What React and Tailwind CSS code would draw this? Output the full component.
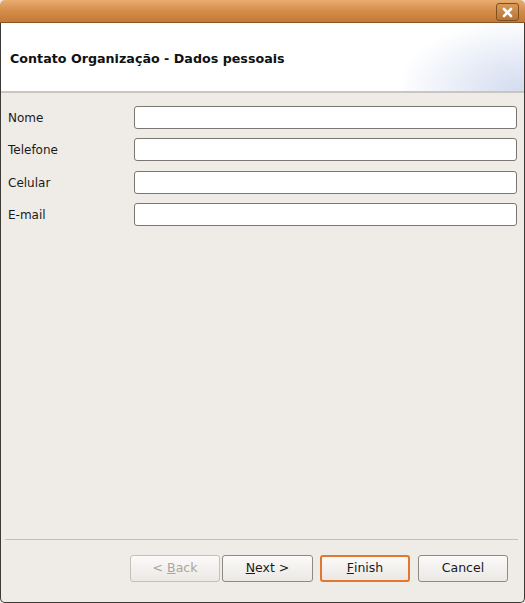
import React from "react";

const font = { fontFamily: '"DejaVu Sans", "Liberation Sans", sans-serif' };

function Field({ label }) {
  return (
    <div className="flex items-center h-[23px]">
      <div className="w-[133px] pl-[7px] text-[12px] text-[#1a1a1a]">{label}</div>
      <div className="flex-1 h-[23px] mr-[7px] bg-white border border-[#7a7772] rounded-[3px]" />
    </div>
  );
}

function Btn({ children, w, focus, disabled, ml }) {
  return (
    <div
      className={
        "h-[27px] flex items-center justify-center rounded-[3px] text-[12.5px] bg-gradient-to-b from-[#fbfaf9] to-[#ebe8e4] " +
        (focus
          ? "border-2 border-[#e2772e] text-[#1a1a1a] "
          : disabled
          ? "border border-[#c4c0ba] text-[#a9a59f] "
          : "border border-[#8d8a85] text-[#1a1a1a] ")
      }
      style={{ width: w, marginLeft: ml }}
    >
      {children}
    </div>
  );
}

export default function App() {
  return (
    <div className="w-[525px] h-[603px] flex flex-col bg-[#efebe7] overflow-hidden" style={font}>
      {/* title bar */}
      <div className="relative h-[23px] rounded-t-[5px] bg-gradient-to-b from-[#e8ad6f] via-[#d48c4a] to-[#c47a35] border-b border-[#8a5523] shrink-0">
        <div className="absolute right-[6px] top-[3px] w-[23px] h-[18px] rounded-[3px] border border-[#7e5020] bg-gradient-to-b from-[#d89a5a] to-[#b87434] flex items-center justify-center">
          <svg width="11" height="11" viewBox="0 0 11 11">
            <path d="M2 2 L9 9 M9 2 L2 9" stroke="#ffffff" strokeWidth="2.6" strokeLinecap="round" />
          </svg>
        </div>
      </div>
      <div className="flex-1 flex flex-col border-x border-b border-[#3c3a36] rounded-b-[5px]">
        {/* header */}
        <div className="relative h-[68px] bg-white flex items-center pl-[9px] shrink-0 overflow-hidden">
          <div className="relative z-10 text-[12.7px] font-bold text-[#111] pt-[4px]">Contato Organização - Dados pessoais</div>
          <div className="absolute right-0 top-0 w-[120px] h-[68px] bg-[radial-gradient(ellipse_at_bottom_right,#d3dbee_0%,#e6ebf6_35%,#ffffff_75%)]" />
        </div>
        <div className="h-[2px] bg-[#c9c5bf] shrink-0" />
        {/* form */}
        <div className="flex flex-col gap-[9px] pt-[13px]">
          <Field label="Nome" />
          <Field label="Telefone" />
          <div className="h-[1px] -mt-[9px]" />
          <Field label="Celular" />
          <Field label="E-mail" />
        </div>
        <div className="flex-1" />
        <div className="h-[1px] bg-[#c2beb8] mx-[4px] mr-[6px]" />
        <div className="flex items-center h-[62px] pl-[129px] pb-[6px]">
          <Btn w={90} disabled>
            &lt; <span className="underline ml-[4px]">B</span>ack
          </Btn>
          <Btn w={91} ml={2}>
            <span className="underline">N</span>ext &gt;
          </Btn>
          <Btn w={90} ml={7} focus>
            <span className="underline">F</span>inish
          </Btn>
          <Btn w={90} ml={8}>
            Cancel
          </Btn>
        </div>
      </div>
    </div>
  );
}
